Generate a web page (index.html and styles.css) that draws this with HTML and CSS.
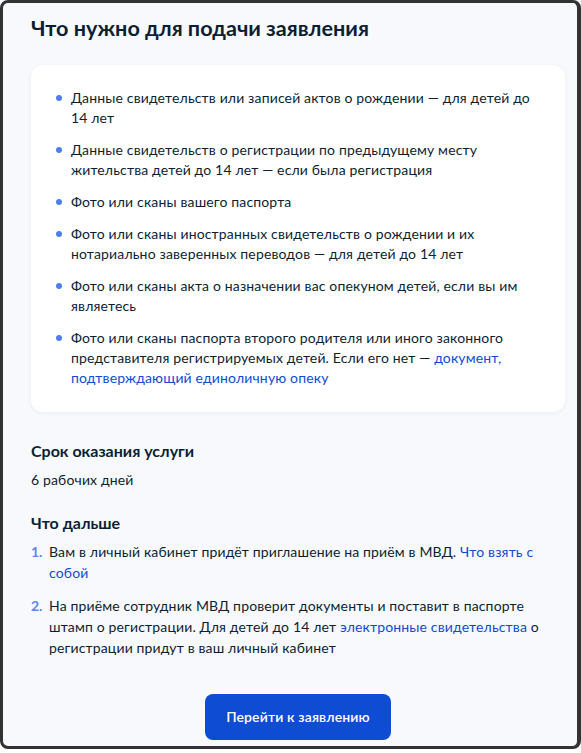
FILE: index.html
```html
<!DOCTYPE html>
<html lang="ru">
<head>
<meta charset="utf-8">
<link rel="stylesheet" href="styles.css">
</head>
<body>
<div class="frame">
  <div class="content">
    <h1 class="title">Что нужно для подачи заявления</h1>
    <div class="card">
      <ul class="bullets">
        <li>Данные свидетельств или записей актов о рождении — для детей до 14 лет</li>
        <li>Данные свидетельств о регистрации по предыдущему месту жительства детей до 14 лет — если была регистрация</li>
        <li>Фото или сканы вашего паспорта</li>
        <li>Фото или сканы иностранных свидетельств о рождении и их нотариально заверенных переводов — для детей до 14 лет</li>
        <li>Фото или сканы акта о назначении вас опекуном детей, если вы им являетесь</li>
        <li>Фото или сканы паспорта второго родителя или иного законного представителя регистрируемых детей. Если его нет — <a class="link" href="#">документ, подтверждающий единоличную опеку</a></li>
      </ul>
    </div>
    <h2 class="subtitle">Срок оказания услуги</h2>
    <p class="text">6 рабочих дней</p>
    <h2 class="subtitle next">Что дальше</h2>
    <ol class="steps">
      <li><span class="num">1.</span><span>Вам в личный кабинет придёт приглашение на приём в МВД. <a class="link" href="#">Что взять с собой</a></span></li>
      <li><span class="num">2.</span><span>На приёме сотрудник МВД проверит документы и поставит в паспорте штамп о регистрации. Для детей до 14 лет <a class="link" href="#">электронные свидетельства</a> о регистрации придут в ваш личный кабинет</span></li>
    </ol>
    <div class="actions">
      <button class="btn" type="button">Перейти к заявлению</button>
    </div>
  </div>
</div>
</body>
</html>
```
FILE: styles.css
```css
html, body {
  margin: 0;
  padding: 0;
  background: #ffffff;
}
body {
  font-family: Lato, "Noto Sans", sans-serif;
  color: #0b1f33;
  width: 581px;
  height: 753px;
  overflow: hidden;
}
.frame {
  box-sizing: border-box;
  width: 581px;
  height: 749px;
  border: 3px solid #333333;
  border-right-width: 4px;
  border-radius: 8px;
  background: #f8f9fc;
}
.content {
  box-sizing: border-box;
  width: 562px;
  padding: 11px 0 0 28px;
}
.title {
  margin: 0;
  font-size: 21.6px;
  line-height: 28px;
  font-weight: 700;
}
.card {
  margin-top: 23px;
  background: #ffffff;
  border-radius: 12px;
  box-shadow: 0 1px 4px rgba(11, 31, 51, 0.06);
  padding: 23px 24px 24px 24px;
}
.bullets {
  list-style: none;
  margin: 0;
  padding: 0;
}
.bullets li {
  position: relative;
  padding-left: 16px;
  font-size: 14px;
  letter-spacing: 0.15px;
  line-height: 20px;
  margin-bottom: 12px;
}
.bullets li:last-child {
  margin-bottom: 0;
}
.bullets li::before {
  content: "";
  position: absolute;
  left: 1px;
  top: 7px;
  width: 6px;
  height: 6px;
  border-radius: 50%;
  background: #4e7ef2;
}
.link {
  color: #0d4cd3;
  text-decoration: none;
}
.subtitle {
  margin: 27px 0 0 0;
  font-size: 16px;
  line-height: 24px;
  font-weight: 700;
}
.subtitle.next {
  margin-top: 21px;
}
.text {
  margin: 7px 0 0 0;
  font-size: 14px;
  letter-spacing: 0.15px;
  line-height: 20px;
}
.steps {
  list-style: none;
  margin: 6px 0 0 0;
  padding: 0;
}
.steps li {
  display: flex;
  font-size: 14px;
  letter-spacing: 0.15px;
  line-height: 21px;
  margin-bottom: 12px;
}
.steps li:last-child {
  margin-bottom: 0;
}
.num {
  flex: 0 0 18px;
  color: #5c85f0;
  font-weight: 700;
  letter-spacing: 0;
}
.actions {
  display: flex;
  justify-content: center;
  margin-top: 36px;
}
.btn {
  border: none;
  background: #0d4cd3;
  color: #ffffff;
  font-family: Lato, "Noto Sans", sans-serif;
  font-size: 14px;
  font-weight: 600;
  letter-spacing: 0.15px;
  line-height: 20px;
  width: 186px;
  height: 46px;
  border-radius: 8px;
  cursor: pointer;
}
```
